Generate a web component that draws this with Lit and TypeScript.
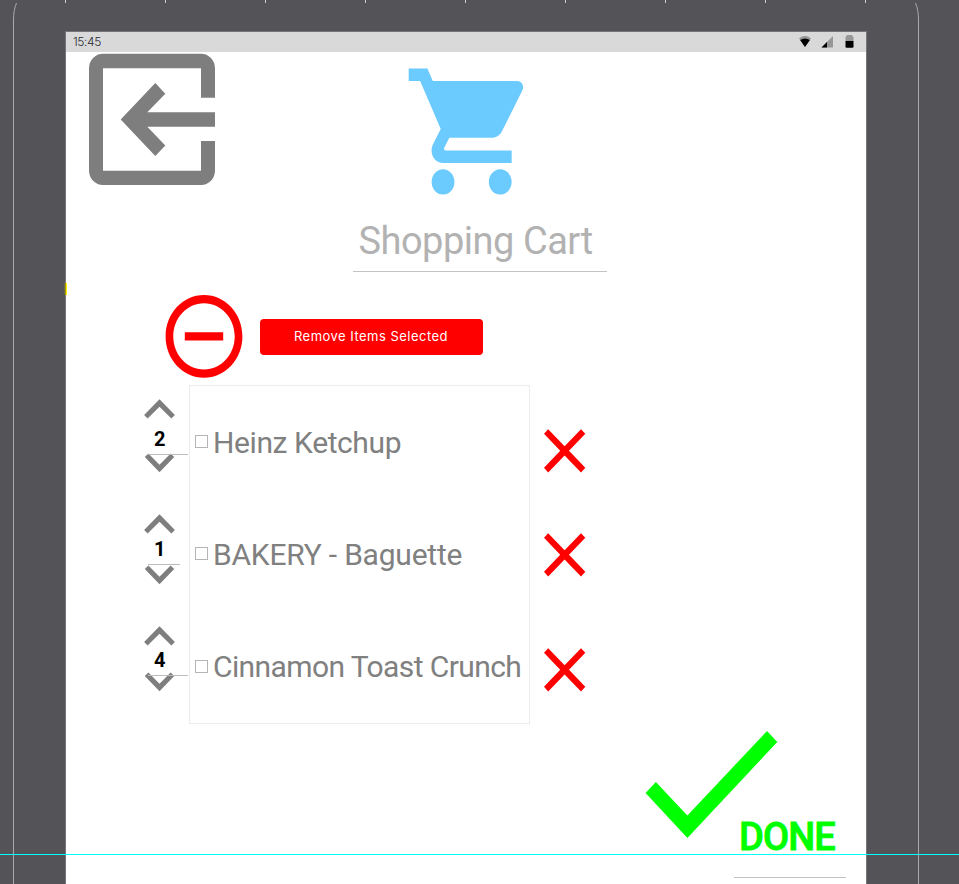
import { LitElement, html, css, svg } from "lit";
import { customElement } from "lit/decorators.js";
import { styleMap } from "lit/directives/style-map.js";

interface Item {
  name: string;
  qty: number;
  /* metrics, all in px */
  stepTop: number;
  fieldHeight: number;
  fieldWidth: number;
  downTop: number;
  rowTop: number;
  checkTop: number;
  tracking: number;
  crossTop: number;
}

const ITEMS: Item[] = [
  { name: "Heinz Ketchup", qty: 2, stepTop: 14, fieldHeight: 36, fieldWidth: 40, downTop: -2, rowTop: 36, checkTop: 13, tracking: -0.4, crossTop: 44 },
  { name: "BAKERY - Baguette", qty: 1, stepTop: 41, fieldHeight: 31, fieldWidth: 32, downTop: 0, rowTop: 72, checkTop: 13, tracking: -0.22, crossTop: 60 },
  { name: "Cinnamon Toast Crunch", qty: 4, stepTop: 41, fieldHeight: 30, fieldWidth: 40, downTop: -4, rowTop: 72, checkTop: 14, tracking: -0.6, crossTop: 71 },
];

const TICKS = [65, 165, 265, 365, 465, 565, 665, 765, 865];
const px = (n: number) => `${n}px`;

@customElement("app-root")
export class AppRoot extends LitElement {
  static styles = css`
    :host {
      display: block;
      position: relative;
      box-sizing: border-box;
      width: 959px;
      height: 884px;
      overflow: hidden;
      background: #545358;
      font-family: Roboto, "Liberation Sans", sans-serif;
      padding: 31px 0 0 65px;
    }
    svg { display: block; flex: none; }
    .bezel { position: absolute; left: 0; top: 0; width: 959px; height: 884px; pointer-events: none; }
    .guide { position: absolute; left: 0; right: 0; top: 854px; height: 1px; background: #00ffff; }
    .marker { position: absolute; left: 64px; top: 283px; width: 3px; height: 12px; background: #ffee00; border-left: 1px solid #6b6840; border-right: 0; box-sizing: border-box; box-shadow: inset 1px 0 #a39b00; }
    .screen {
      box-sizing: border-box;
      width: 802px;
      height: 860px;
      border: 1px solid #75757a;
      background: #fff;
    }
    .status {
      height: 20px;
      background: #d9d9d9;
      display: flex;
      align-items: center;
      justify-content: space-between;
      box-sizing: border-box;
      padding: 0 11px 0 7px;
    }
    .time { font: 300 12px/20px Inter, sans-serif; letter-spacing: -0.4px; color: #2b2b35; }
    .top { display: flex; height: 220px; align-items: flex-start; }
    .exit { margin: 1px 0 0 22px; }
    .brand { width: 254px; height: 220px; margin-left: 137px; display: flex; flex-direction: column; box-sizing: border-box; padding-top: 16px; border-bottom: 1px solid #c3c3c3; }
    .cart { margin-left: 55px; }
    .title { font-size: 38px; line-height: 44px; margin: 24px 0 0 5.4px; color: #b2b2b2; white-space: nowrap; letter-spacing: -0.48px; }
    .remove { display: flex; align-items: center; height: 83px; margin: 23px 0 7px 99px; gap: 17px; }
    .button {
      width: 223px; height: 36px; border-radius: 4px; background: #f00; color: #fff;
      display: flex; align-items: center; justify-content: center;
      font: 400 13px/36px Inter, sans-serif;
      letter-spacing: 0.48px;
      box-sizing: border-box; padding: 0 1px 2px 0;
      border: 0; white-space: nowrap;
    }
    .list { display: flex; height: 339px; }
    .steppers { width: 123px; flex: none; }
    .stepper { display: flex; flex-direction: column; align-items: flex-start; margin-left: 78px; }
    .qty { box-sizing: border-box; border-bottom: 1px solid #bdbdbd; margin-left: 4px; position: relative; z-index: 1; display: flex; align-items: flex-end; padding-left: 6px; }
    .num { font-size: 20px; line-height: 24px; font-weight: 700; color: #000; margin-bottom: 3px; }
    .box { box-sizing: border-box; width: 341px; border: 1px solid #ececee; flex: none; }
    .row { display: flex; height: 40px; align-items: flex-start; padding-left: 5px; }
    .check { width: 13px; height: 13px; box-sizing: border-box; border: 1px solid #b5b5b5; flex: none; }
    .name { font-size: 30px; line-height: 40px; color: #808080; margin: 1px 0 0 5px; white-space: nowrap; }
    .crosses { margin-left: 14px; }
    .done { display: flex; margin: 7px 0 0 579px; }
    .doneField { width: 112px; height: 147px; box-sizing: border-box; border-bottom: 1px solid #c3c3c3; margin-left: -44px; padding: 84px 0 0 5px; font-size: 38px; line-height: 44px; font-weight: 500; color: #0f0; white-space: nowrap; letter-spacing: -0.9px; -webkit-text-stroke: 0.9px #0f0; }
  `;

  private bezel() {
    return html`<svg class="bezel" viewBox="0 0 959 884">
      <path d="M16.5 3C14.5 8 13.5 13 13.5 20V884M915.5 3C917.5 8 918.5 13 918.5 20V884" fill="none" stroke="#a9a9ac" />
      ${TICKS.map((x) => svg`<path d="M${x + 0.5} 0v3" stroke="#cfcfd1" />`)}
    </svg>`;
  }

  private statusIcons() {
    return html`<svg width="56" height="14" viewBox="0 0 56 14">
      <path d="M0 3.2Q6-1 12 3.2L6 12z" fill="#979797" />
      <path d="M1.1 5Q6 2 10.9 5L6 12z" fill="#000" />
      <path d="M34 1V12.4H22.5z" fill="#979797" />
      <path d="M28 7V12.4H22.5z" fill="#000" />
      <path d="M46.5 6V1.9Q47.6 1.2 48 0H52.8Q53.2 1.2 54.5 1.9V6z" fill="#979797" />
      <path d="M46.5 6H54.5V11.8Q54.5 12.7 53.5 12.7H47.5Q46.5 12.7 46.5 11.8z" fill="#000" />
    </svg>`;
  }

  private chevron(down: boolean) {
    return html`<svg width="31" height="20" viewBox="0 0 31 20">
      <path
        fill="#7e7e7e"
        d=${down
          ? "M4.4 .4L15.5 11.7 26.6 .4 30.2 4 15.5 19.3 .8 4z"
          : "M15.5 .2L30.9 16 27.4 19.6 15.5 7.7 3.6 19.6 .1 16z"}
      />
    </svg>`;
  }

  render() {
    return html`
      ${this.bezel()}
      <div class="screen">
        <div class="status"><span class="time">15:45</span>${this.statusIcons()}</div>
        <div class="top">
          <svg class="exit" width="128" height="133" viewBox="88 53 128 133">
            <path
              fill="#7e7e7e"
              d="M103 53.7H201a14 14.6 0 0 1 14 14.6V97.7H201V68.3H103V170.7H201V141H215V170.4a14 14.6 0 0 1-14 14.6H103a14 14.6 0 0 1-14-14.6V68.3a14 14.6 0 0 1 14-14.6zM120.7 119.4L155.3 83l10 10.7-18 18.6H215v14.4H147.3l18 18.8-10 10.4z"
            />
          </svg>
          <div class="brand">
            <svg class="cart" width="116" height="127" viewBox="0 0 116 127">
              <path
                fill="#6bcbff"
                transform="translate(.7 .4) scale(5.72 6.31) translate(-1 -2)"
                d="M7 18c-1.1 0-1.99.9-1.99 2S5.9 22 7 22s2-.9 2-2-.9-2-2-2zM1 2v2h2l3.6 7.59-1.35 2.45c-.16.28-.25.61-.25.96 0 1.1.9 2 2 2h12v-2H7.42c-.14 0-.25-.11-.25-.25l.03-.12.9-1.63h7.45c.75 0 1.41-.41 1.75-1.03l3.58-6.49c.08-.14.12-.31.12-.48 0-.55-.45-1-1-1H5.21l-.94-2H1zm16 16c-1.1 0-1.99.9-1.99 2s.89 2 1.99 2 2-.9 2-2-.9-2-2-2z"
              />
            </svg>
            <div class="title">Shopping Cart</div>
          </div>
        </div>
        <div class="remove">
          <svg width="78" height="83" viewBox="0 0 78 83">
            <path
              fill="#f00"
              transform="translate(.6 .1) scale(3.84 4.13) translate(-2 -2)"
              d="M7 11v2h10v-2H7zm5-9C6.48 2 2 6.48 2 12s4.48 10 10 10 10-4.48 10-10S17.52 2 12 2zm0 18c-4.41 0-8-3.59-8-8s3.59-8 8-8 8 3.59 8 8-3.59 8-8 8z"
            />
          </svg>
          <button class="button">Remove Items Selected</button>
        </div>
        <div class="list">
          <div class="steppers">
            ${ITEMS.map(
              (i) => html`<div class="stepper" style=${styleMap({ paddingTop: px(i.stepTop) })}>
                ${this.chevron(false)}
                <div class="qty" style=${styleMap({ width: px(i.fieldWidth), height: px(i.fieldHeight) })}>
                  <span class="num">${i.qty}</span>
                </div>
                <div style=${styleMap({ marginTop: px(i.downTop) })}>${this.chevron(true)}</div>
              </div>`
            )}
          </div>
          <div class="box">
            ${ITEMS.map(
              (i) => html`<div class="row" style=${styleMap({ marginTop: px(i.rowTop) })}>
                <span class="check" style=${styleMap({ marginTop: px(i.checkTop) })}></span
                ><span class="name" style=${styleMap({ letterSpacing: px(i.tracking) })}>${i.name}</span>
              </div>`
            )}
          </div>
          <div class="crosses">
            ${ITEMS.map(
              (i) => html`<div style=${styleMap({ paddingTop: px(i.crossTop) })}>
                <svg width="42" height="44" viewBox="0 0 42 44">
                  <path
                    fill="#f00"
                    d="M4.2 .2L20.6 17.2 37 .2 41.3 4.8 25 21.8 41.3 38.8 37 43.4 20.6 26.4 4.2 43.4 0 38.8 16.2 21.8 0 4.8z"
                  />
                </svg>
              </div>`
            )}
          </div>
        </div>
        <div class="done">
          <svg width="133" height="107" viewBox="0 0 133 107">
            <path fill="#0f0" transform="translate(.6 0)" d="M0 62L10.3 51 41.8 84.5 121.4 0 131.7 11 41.8 107z" />
          </svg>
          <div class="doneField">DONE</div>
        </div>
      </div>
      <div class="marker"></div>
      <div class="guide"></div>
    `;
  }
}
